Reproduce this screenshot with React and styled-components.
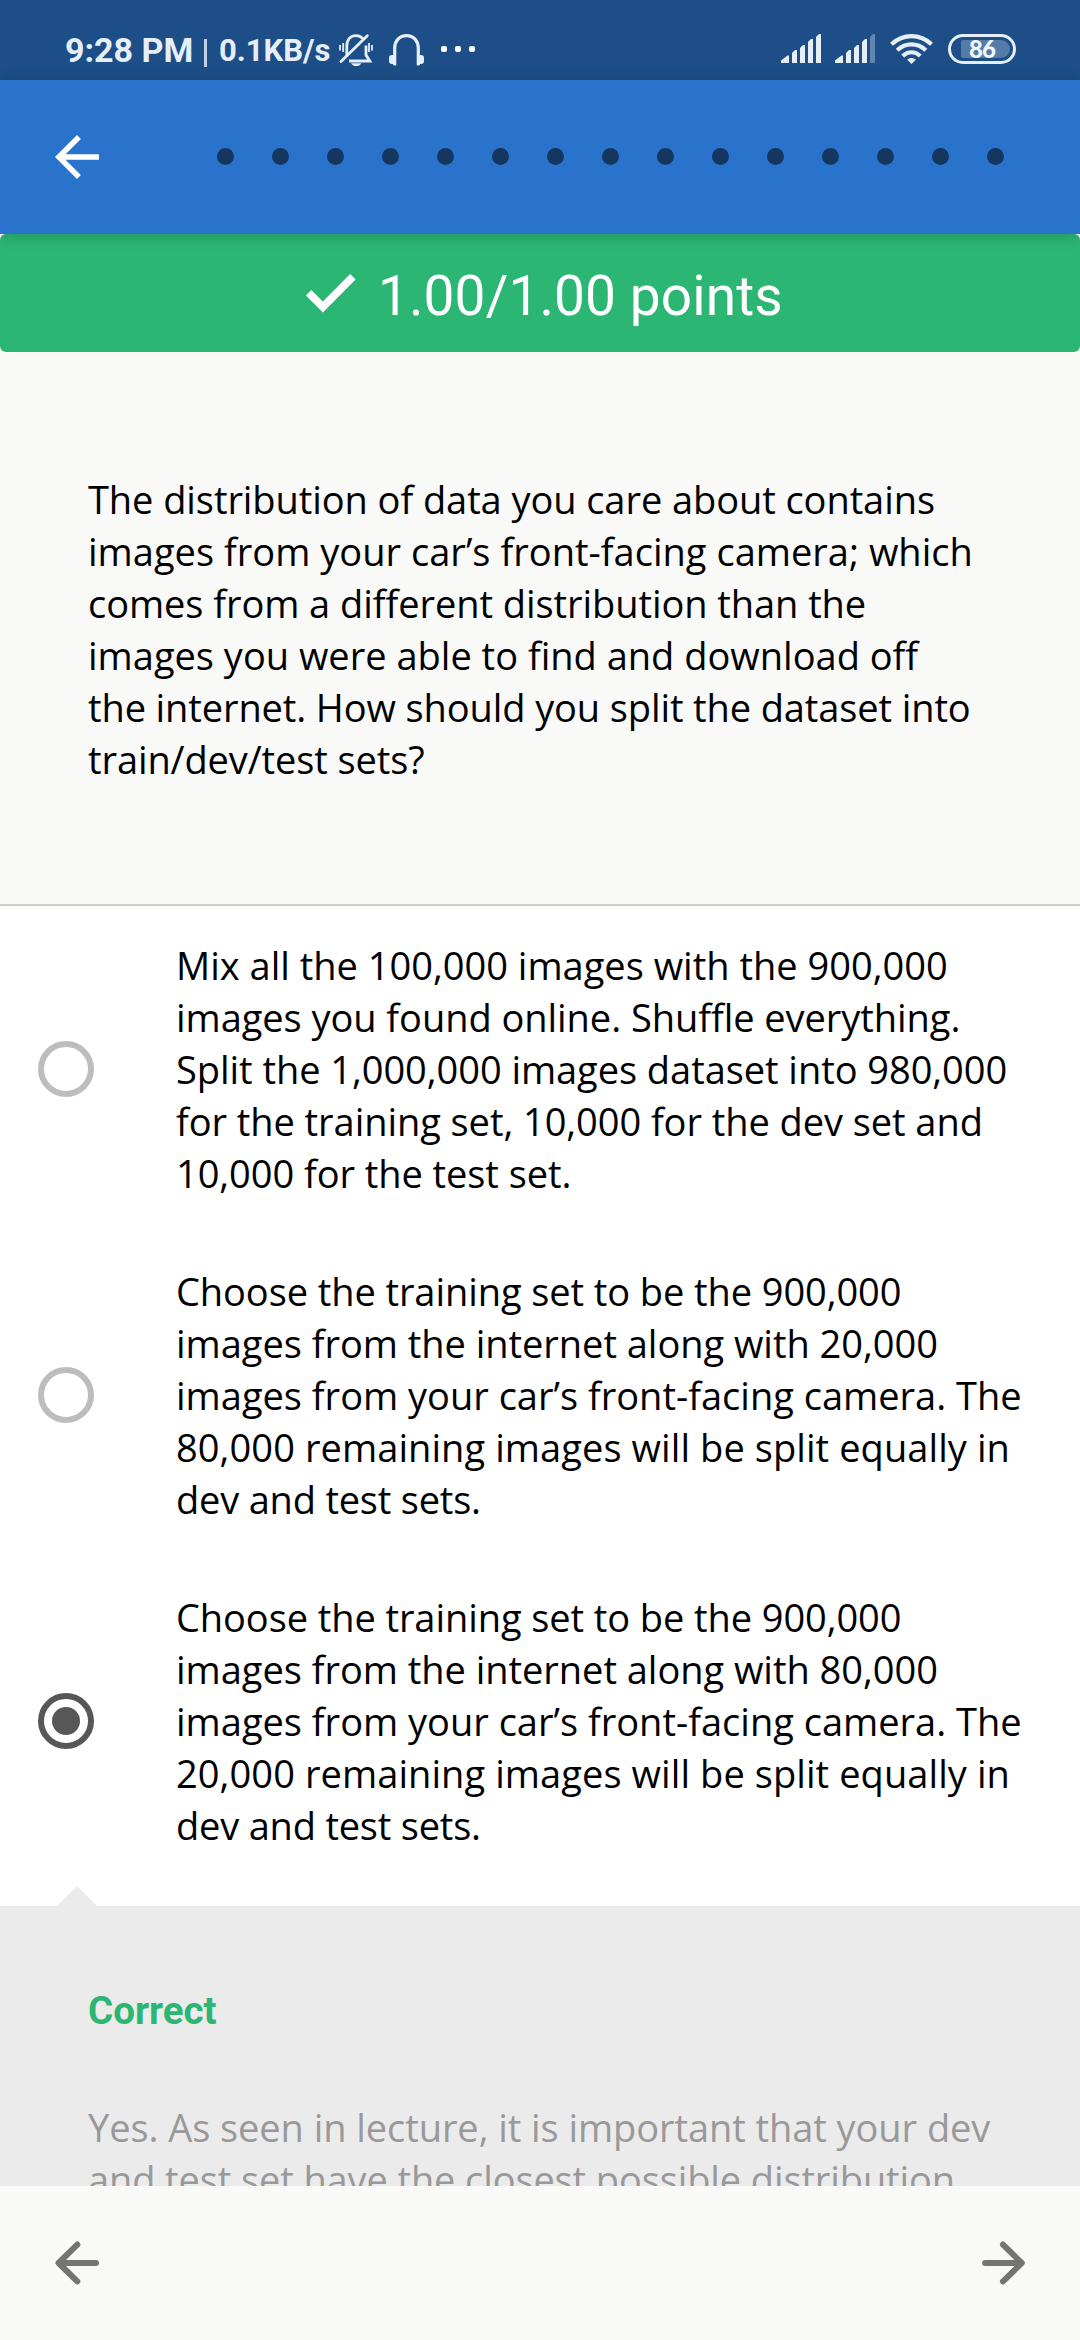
import React from "react";
import styled, { createGlobalStyle } from "styled-components";

const Global = createGlobalStyle`
  * { box-sizing: border-box; }
  body { margin: 0; background: #fff; }
`;

const Screen = styled.div`
  width: 1080px;
  height: 2340px;
  display: flex;
  flex-direction: column;
  overflow: hidden;
  background: #fff;
`;

const StatusBar = styled.header`
  flex: none;
  height: 80px;
  padding: 0 64px 0 65px;
  display: flex;
  align-items: flex-start;
  background: #1d4e87;
  color: #e6eef8;
  font-family: Roboto, sans-serif;
  font-weight: 700;
  white-space: pre;
`;

const Clock = styled.span`
  width: 129px;
  padding-top: 30px;
  font-size: 34px;
  line-height: 40px;
`;

const Divider = styled.span`
  width: 3px;
  height: 28px;
  margin: 39px 12px 0 10px;
  background: #c3d0e1;
`;

const Speed = styled.span`
  width: 120px;
  padding-top: 31px;
  font-size: 31px;
  line-height: 40px;
`;

const StatusIcon = styled.svg`
  flex: none;
  display: block;
  width: ${(p) => p.$w}px;
  height: 36px;
  margin-top: 32px;
  margin-left: ${(p) => p.$gap || 0}px;
`;

const Battery = styled.div`
  flex: none;
  width: 68px;
  height: 30px;
  margin: 34px 0 0 15px;
  padding: 3px 3px 3px 10px;
  border: 3px solid #e6eef8;
  border-radius: 15px;
`;

const Charge = styled.div`
  width: 49px;
  height: 18px;
  padding-left: 8px;
  border-radius: 2px 9px 9px 2px;
  background: #557ba8;
  color: #f2f6fb;
  font: 900 24px/18px Lato, sans-serif;
  letter-spacing: -1px;
`;

const Spacer = styled.div`
  flex: 1;
`;

const AppBar = styled.nav`
  position: relative;
  z-index: 1;
  flex: none;
  height: 154px;
  padding: 0 76px 0 44px;
  display: flex;
  align-items: center;
  justify-content: space-between;
  background: #2a73cc;
  box-shadow: 0 2px 14px rgba(0, 0, 0, 0.2);
`;

const Icon = styled.svg`
  flex: none;
  display: block;
  width: ${(p) => p.$size}px;
  height: ${(p) => p.$size}px;
`;

const Pager = styled.div`
  display: flex;
  gap: 38px;
  padding-bottom: 1px;
`;

const Dot = styled.i`
  width: 17px;
  height: 17px;
  border-radius: 50%;
  background: #15375f;
`;

const Score = styled.div`
  flex: none;
  height: 118px;
  display: flex;
  padding-left: 297px;
  align-items: center;
  border-radius: 6px;
  background: #2cb673;
  color: #fff;
  font: 400 55px/64px Roboto, sans-serif;
  letter-spacing: 0.1px;
  white-space: pre;
`;

const ScoreText = styled.span`
  padding: 6px 0 0 15px;
`;

const Question = styled.section`
  flex: none;
  height: 554px;
  padding: 121px 88px 0;
  background: #f9f9f7;
  border-bottom: 2px solid #cdcdcd;
`;

const Body = styled.p`
  margin: 0;
  color: ${(p) => p.$color || "#000"};
  font-family: "Open Sans", sans-serif;
  font-size: 38px;
  line-height: 52px;
  white-space: pre;
`;

const Line = styled.span`
  display: block;
  letter-spacing: ${(p) => p.$track}px;
`;

const Options = styled.section`
  flex: none;
  height: 1000px;
`;

const Option = styled.div`
  height: 326px;
  padding-left: 38px;
  display: flex;
  align-items: center;
  gap: 82px;
`;

const Radio = styled.span`
  flex: none;
  width: 56px;
  height: 56px;
  display: grid;
  place-items: center;
  border: 6px solid ${(p) => (p.$on ? "#575757" : "#bdbdbd")};
  border-radius: 50%;

  &::after {
    content: "";
    width: 28px;
    height: 28px;
    border-radius: 50%;
    background: ${(p) => (p.$on ? "#575757" : "transparent")};
  }
`;

const Feedback = styled.section`
  position: relative;
  flex: none;
  height: 280px;
  padding: 82px 88px 0;
  background: #ebebeb;

  &::before {
    content: "";
    position: absolute;
    left: 57px;
    top: -20px;
    border: solid transparent;
    border-width: 0 20px 20px;
    border-bottom-color: #ebebeb;
  }
`;

const Verdict = styled.h2`
  margin: 0 0 67px;
  color: #2cb673;
  font: 700 38.5px/46px Roboto, sans-serif;
`;

const Footer = styled.footer`
  position: relative;
  flex: none;
  height: 154px;
  padding: 0 44px;
  display: flex;
  align-items: center;
  justify-content: space-between;
  background: #f9f9f7;
`;

/* Each line of copy carries its own tracking. */
const question = [
  ["The distribution of data you care about contains", -0.07],
  ["images from your car’s front-facing camera; which", 0.02],
  ["comes from a different distribution than the", -0.06],
  ["images you were able to find and download off", 0],
  ["the internet. How should you split the dataset into", -0.11],
  ["train/dev/test sets?", -0.1],
];

const options = [
  {
    lines: [
      ["Mix all the 100,000 images with the 900,000", 0],
      ["images you found online. Shuffle everything.", -0.05],
      ["Split the 1,000,000 images dataset into 980,000", -0.05],
      ["for the training set, 10,000 for the dev set and", -0.06],
      ["10,000 for the test set.", -0.06],
    ],
  },
  {
    lines: [
      ["Choose the training set to be the 900,000", -0.08],
      ["images from the internet along with 20,000", -0.03],
      ["images from your car’s front-facing camera. The", 0],
      ["80,000 remaining images will be split equally in", 0.08],
      ["dev and test sets.", -0.2],
    ],
  },
  {
    on: true,
    lines: [
      ["Choose the training set to be the 900,000", -0.08],
      ["images from the internet along with 80,000", -0.03],
      ["images from your car’s front-facing camera. The", 0],
      ["20,000 remaining images will be split equally in", 0.08],
      ["dev and test sets.", -0.2],
    ],
  },
];

const feedback = [
  ["Yes. As seen in lecture, it is important that your dev", -0.065],
  ["and test set have the closest possible distribution", -0.11],
];

function Copy({ lines, color }) {
  return (
    <Body $color={color}>
      {lines.map(([text, track]) => (
        <Line key={text} $track={track}>
          {text}
        </Line>
      ))}
    </Body>
  );
}

function Signal({ weak, gap }) {
  return (
    <StatusIcon $w={40} $gap={gap} viewBox="0 0 40 36" fill="#e6eef8">
      <path d="M0 31V28.5L6.5 23.5H8V31Z" />
      <path d="M11 31V21L14 18H16V31Z" />
      <path d="M19 31V16L22 13H24V31Z" />
      <path d="M27 31V10L30 7H32V31Z" />
      <path d="M35 31V5L38 2H40V31Z" opacity={weak ? 0.35 : 1} />
    </StatusIcon>
  );
}

function Arrow({ flip }) {
  return (
    <Icon
      $size={66}
      viewBox="0 0 24 24"
      fill="none"
      stroke="#747472"
      strokeWidth="2.2"
      strokeLinecap="round"
      strokeLinejoin="round"
    >
      <path d={flip ? "M5.5 12H18.6M12 5.3L18.8 12L12 18.7" : "M18.9 12H5.4M12.1 5.3L5.3 12L12.1 18.7"} />
    </Icon>
  );
}

export default function App() {
  return (
    <Screen>
      <Global />
      <StatusBar>
        <Clock>9:28 PM</Clock>
        <Divider />
        <Speed>0.1KB/s</Speed>
        <StatusIcon $w={34} viewBox="0 0 34 36" fill="none" stroke="#e6eef8" strokeWidth="2.8">
          <path d="M7.8 24V14C7.8 7.5 11.5 3.6 17 3.6C20 3.6 22.5 4.8 24.2 7M27 13.5V23L30.8 29H10" />
          <path d="M2 29.5L28.3 3.8" strokeLinecap="round" />
          <path d="M4.2 11V20M1 13V18.5M30 11V20M33 13V18.5" strokeWidth="1.8" />
          <path d="M12 31.2H22.5C21 33.2 19.5 34 17.2 34C15 34 13.3 33.2 12 31.2Z" fill="#e6eef8" stroke="none" />
        </StatusIcon>
        <StatusIcon $w={35} $gap={16} viewBox="0 0 35 36" fill="none">
          <path d="M5.7 33V16C5.7 8.8 10.5 3.6 17.5 3.6S29.3 8.8 29.3 16V33" stroke="#e6eef8" strokeWidth="3.2" />
          <path d="M3 23H7V33.5H5L4 32H3Q0 32 0 29V26Q0 23 3 23ZM32 23H28V33.5H30L31 32H32Q35 32 35 29V26Q35 23 32 23Z" fill="#e6eef8" />
        </StatusIcon>
        <StatusIcon $w={34} $gap={17} viewBox="0 0 34 36" fill="#fff">
          <rect x="0" y="14" width="6" height="6" rx="2" />
          <rect x="14" y="14" width="6" height="6" rx="2" />
          <rect x="28" y="14" width="6" height="6" rx="2" />
        </StatusIcon>
        <Spacer />
        <Signal />
        <Signal weak gap={14} />
        <StatusIcon $w={43} $gap={15} viewBox="0 0 43 36" fill="none" stroke="#e6eef8" strokeWidth="4.2">
          <path d="M1.5 12.3C13 1.5 30 1.5 41.5 12.3" />
          <path d="M7.2 18.2C15.5 10.4 27.5 10.4 35.8 18.2" />
          <path d="M12.7 24C18 19 25 19 30.3 24" />
          <path d="M21.5 32L17.2 27.8C19.6 25.4 23.4 25.4 25.8 27.8Z" fill="#e6eef8" stroke="none" />
        </StatusIcon>
        <Battery>
          <Charge>86</Charge>
        </Battery>
      </StatusBar>

      <AppBar>
        <Icon $size={66} viewBox="0 0 24 24" fill="#fff">
          <path d="M20 11H7.83l5.59-5.59L12 4l-8 8 8 8 1.41-1.41L7.83 13H20v-2z" />
        </Icon>
        <Pager>
          {Array.from({ length: 15 }, (_, i) => (
            <Dot key={i} />
          ))}
        </Pager>
      </AppBar>

      <Score>
        <Icon $size={66} viewBox="0 0 24 24" fill="none" stroke="#fff" strokeWidth="2.8">
          <path d="M4.2 11.9L9.4 17.1L20.3 6.1" />
        </Icon>
        <ScoreText>1.00/1.00 points</ScoreText>
      </Score>

      <Question>
        <Copy lines={question} />
      </Question>

      <Options>
        {options.map((o, i) => (
          <Option key={i}>
            <Radio $on={o.on} />
            <Copy lines={o.lines} />
          </Option>
        ))}
      </Options>

      <Feedback>
        <Verdict>Correct</Verdict>
        <Copy lines={feedback} color="#999" />
      </Feedback>

      <Footer>
        <Arrow />
        <Arrow flip />
      </Footer>
    </Screen>
  );
}
